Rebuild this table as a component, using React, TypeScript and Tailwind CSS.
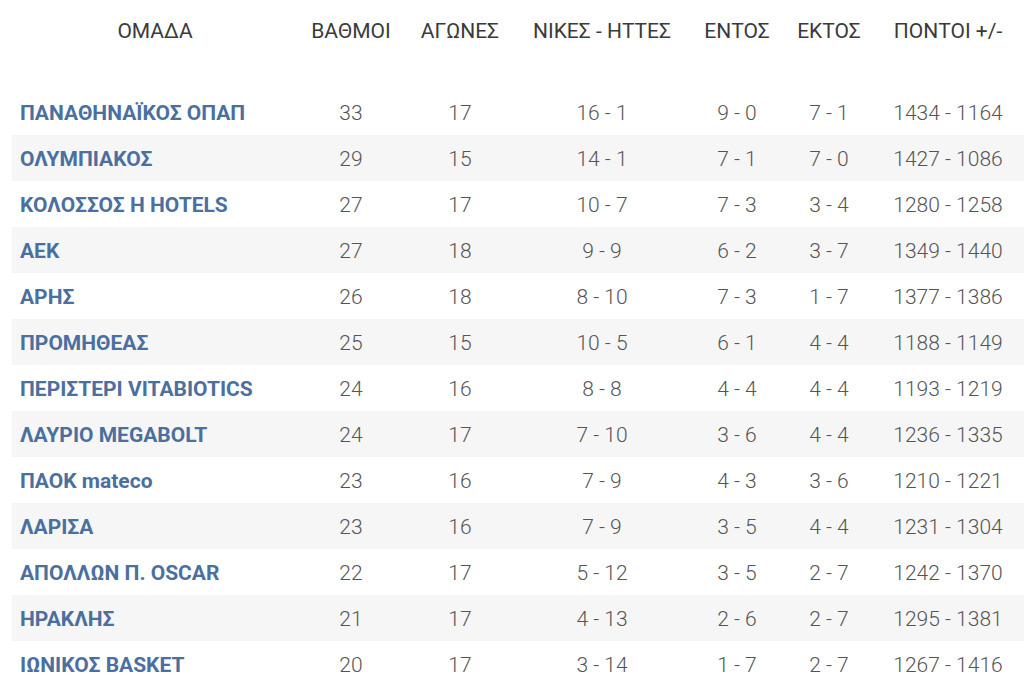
const rows: [string, number, number, string, string, string, string][] = [
  ["ΠΑΝΑΘΗΝΑΪΚΟΣ ΟΠΑΠ", 33, 17, "16 - 1", "9 - 0", "7 - 1", "1434 - 1164"],
  ["ΟΛΥΜΠΙΑΚΟΣ", 29, 15, "14 - 1", "7 - 1", "7 - 0", "1427 - 1086"],
  ["ΚΟΛΟΣΣΟΣ H HOTELS", 27, 17, "10 - 7", "7 - 3", "3 - 4", "1280 - 1258"],
  ["ΑΕΚ", 27, 18, "9 - 9", "6 - 2", "3 - 7", "1349 - 1440"],
  ["ΑΡΗΣ", 26, 18, "8 - 10", "7 - 3", "1 - 7", "1377 - 1386"],
  ["ΠΡΟΜΗΘΕΑΣ", 25, 15, "10 - 5", "6 - 1", "4 - 4", "1188 - 1149"],
  ["ΠΕΡΙΣΤΕΡΙ VITABIOTICS", 24, 16, "8 - 8", "4 - 4", "4 - 4", "1193 - 1219"],
  ["ΛΑΥΡΙΟ MEGABOLT", 24, 17, "7 - 10", "3 - 6", "4 - 4", "1236 - 1335"],
  ["ΠΑΟΚ mateco", 23, 16, "7 - 9", "4 - 3", "3 - 6", "1210 - 1221"],
  ["ΛΑΡΙΣΑ", 23, 16, "7 - 9", "3 - 5", "4 - 4", "1231 - 1304"],
  ["ΑΠΟΛΛΩΝ Π. OSCAR", 22, 17, "5 - 12", "3 - 5", "2 - 7", "1242 - 1370"],
  ["ΗΡΑΚΛΗΣ", 21, 17, "4 - 13", "2 - 6", "2 - 7", "1295 - 1381"],
  ["ΙΩΝΙΚΟΣ BASKET", 20, 17, "3 - 14", "1 - 7", "2 - 7", "1267 - 1416"],
];

const headers = ["ΟΜΑΔΑ", "ΒΑΘΜΟΙ", "ΑΓΩΝΕΣ", "ΝΙΚΕΣ - ΗΤΤΕΣ", "ΕΝΤΟΣ", "ΕΚΤΟΣ", "ΠΟΝΤΟΙ +/-"];

const grid = "grid grid-cols-[286px_106px_112px_172px_98px_86px_152px]";

export default function App() {
  return (
    <div className="min-h-screen w-[1024px] overflow-hidden bg-white font-['Roboto',sans-serif]">
      <div className="ml-[12px]">
        {/* encabezado */}
        <div className={`${grid} h-[60px] items-center pt-[3px] text-[21px] text-[#3a3a3a]`}>
          {headers.map((h) => (
            <div key={h} className="text-center">
              {h}
            </div>
          ))}
        </div>

        <div className="mt-[29px]">
          {rows.map((r, i) => (
            <div
              key={r[0]}
              className={`${grid} h-[46px] items-center pt-[3px] text-[21px] ${i % 2 === 1 ? "bg-[#f6f6f6]" : "bg-white"}`}
            >
              <div className="pl-[8px] font-bold text-[#4b6f9f] whitespace-nowrap">{r[0]}</div>
              {r.slice(1).map((v, j) => (
                <div key={j} className="text-center font-light text-[#555555] whitespace-nowrap">
                  {v}
                </div>
              ))}
            </div>
          ))}
        </div>
      </div>
    </div>
  );
}
